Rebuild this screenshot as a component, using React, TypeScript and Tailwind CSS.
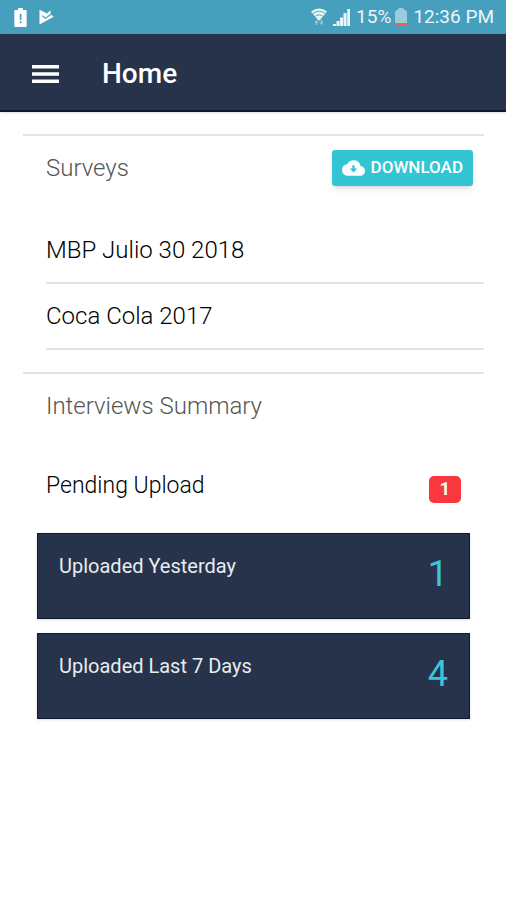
import type { ReactNode } from "react";

type UploadCardProps = {
  label: string;
  count: number;
};

const surveys = ["MBP Julio 30 2018", "Coca Cola 2017"];

const uploads: UploadCardProps[] = [
  { label: "Uploaded Yesterday", count: 1 },
  { label: "Uploaded Last 7 Days", count: 4 },
];

function StatusBar() {
  return (
    <div className="flex h-[34px] items-center justify-between bg-[#479fbe] pl-3.5 pr-3 text-white">
      <div className="flex items-center gap-3">
        <svg className="h-[19px] w-[13px]" viewBox="0 0 13 20" aria-hidden>
          <path d="M4 0h5v2h3a1 1 0 0 1 1 1v16a1 1 0 0 1-1 1H1a1 1 0 0 1-1-1V3a1 1 0 0 1 1-1h3z" fill="#fff" />
          <path d="M5.7 6h1.8v6.5H5.7zM5.7 14h1.8v2H5.7z" fill="#479fbe" />
        </svg>
        <svg className="h-4 w-[15px]" viewBox="0 0 15 16" aria-hidden>
          <path d="M.5.8 8.2 4.4 11.4 1.2l.4 4.3 2.9 2.3L.5 15.6z" fill="#fff" />
          <path d="m3.2 6.8 3.4 2.4L13 4.4" fill="none" stroke="#479fbe" strokeWidth="1.2" />
        </svg>
      </div>
      <div className="flex items-center text-[19px] leading-6 text-[#eaf6fa]">
        <svg className="mr-1.5 h-[18px] w-4" viewBox="0 0 16 18" aria-hidden>
          <path d="M0 3.6Q8-2.6 16 3.6L9.6 11.3 8 12.8 6.4 11.3z" fill="#eaf6fa" />
          <path d="M2 5.4q6-4.4 12 0M4.4 8q3.6-2.6 7.2 0" fill="none" stroke="#479fbe" strokeWidth=".9" />
          <path d="m3.5 14.5 2-2.5 2 2.5H6.3V17H4.7v-2.5zM8.5 14.5h1.2V12h1.6v2.5h1.2l-2 2.5z" fill="#9dcbde" />
        </svg>
        <svg className="mr-1.5 h-[18px] w-[17px]" viewBox="0 0 17 18" aria-hidden>
          <path d="M0 16h3v2H0zM3.5 13h3v5h-3zM7 9.5h3V18H7zM10.5 5h3v13h-3zM14.2 1H17v17h-2.8z" fill="#eaf6fa" />
        </svg>
        <span>15%</span>
        <svg className="ml-1 mr-1.5 h-[18px] w-3" viewBox="0 0 12 18" aria-hidden>
          <path d="M3.5 0h5v1.2L12 3.5V18H0V3.5l3.5-2.3z" fill="#9dcbde" />
          <path d="M0 15h12v3H0z" fill="#e5674c" />
        </svg>
        <span>12:36 PM</span>
      </div>
    </div>
  );
}

function Header() {
  return (
    <header className="flex h-[78px] items-center border-b-2 border-[#111632] bg-[#27334b] pl-8 pt-1 text-white shadow-sm">
      <button type="button" aria-label="Menu" className="mr-[43px]">
        <svg className="h-[18px] w-[27px]" viewBox="0 0 27 18" aria-hidden>
          <path d="M0 0h27v3.4H0zM0 7.3h27v3.4H0zM0 14.6h27V18H0z" fill="currentColor" />
        </svg>
      </button>
      <h1 className="text-[28px] font-medium leading-8">Home</h1>
    </header>
  );
}

function Section({ title, action, children }: { title: string; action?: ReactNode; children: ReactNode }) {
  return (
    <section className="ml-[23px] mr-[22px] mt-[22px] border-t-2 border-[#e4e4e4]">
      <div className="flex h-16 items-center justify-between pl-[23px] pr-[11px]">
        <h2 className="text-2xl font-light text-[#555]">{title}</h2>
        {action}
      </div>
      <div className="mt-[18px]">{children}</div>
    </section>
  );
}

function DownloadButton() {
  return (
    <button
      type="button"
      className="flex h-9 items-center gap-1.5 rounded-[3px] bg-[#32c5d3] px-2.5 text-[17px] font-medium text-white shadow-md"
    >
      <svg className="h-4 w-[23px]" viewBox="0 0 24 16" aria-hidden>
        <path
          fillRule="evenodd"
          fill="currentColor"
          d="M19.35 6.04A7.49 7.49 0 0 0 12 0C9.11 0 6.6 1.64 5.35 4.04A5.994 5.994 0 0 0 0 10c0 3.31 2.69 6 6 6h13c2.76 0 5-2.24 5-5 0-2.64-2.05-4.78-4.65-4.96zM16 8.6l-4 4-4-4h2.8V5h2.4v3.6z"
        />
      </svg>
      DOWNLOAD
    </button>
  );
}

function UploadCard({ label, count }: UploadCardProps) {
  return (
    <div className="flex h-[86px] justify-between border border-[#111632] bg-[#27334b] px-[21px] pt-5 shadow">
      <span className="text-xl leading-6 text-[#e8ebf2]">{label}</span>
      <span className="text-4xl text-[#3cc4d8]">{count}</span>
    </div>
  );
}

export default function App() {
  return (
    <div className="min-h-screen bg-white font-['Roboto',sans-serif]">
      <StatusBar />
      <Header />
      <main>
        <Section title="Surveys" action={<DownloadButton />}>
          <ul className="pl-[23px]">
            {surveys.map((name) => (
              <li
                key={name}
                className="flex h-[66px] items-center border-b-2 border-[#e4e4e4] text-2xl font-light text-black"
              >
                {name}
              </li>
            ))}
          </ul>
        </Section>
        <Section title="Interviews Summary">
          <div className="flex h-[66px] items-center justify-between px-[23px]">
            <span className="pb-1.5 text-[23px] font-light text-black">Pending Upload</span>
            <span className="flex h-[27px] w-8 items-center justify-center rounded-[5px] bg-[#f8383c] text-lg font-bold text-white">
              1
            </span>
          </div>
        </Section>
        <div className="ml-[37px] mr-9 mt-[11px] flex flex-col gap-3.5">
          {uploads.map((upload) => (
            <UploadCard key={upload.label} {...upload} />
          ))}
        </div>
      </main>
    </div>
  );
}
